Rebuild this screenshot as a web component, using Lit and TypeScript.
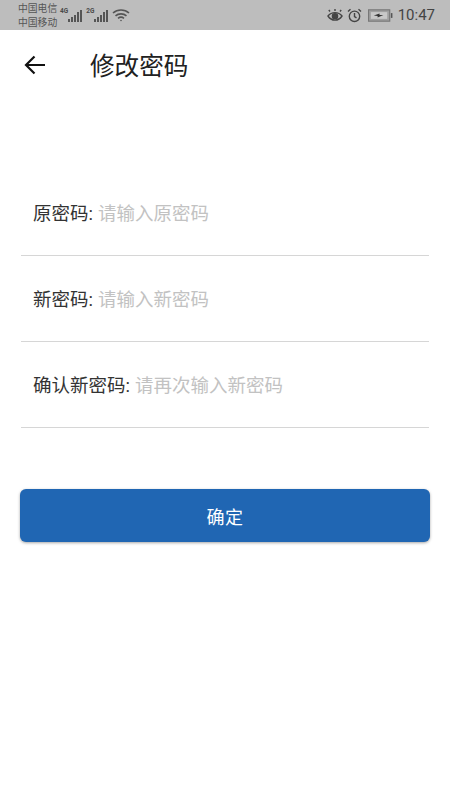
import { LitElement, html, css } from "lit";
import { customElement } from "lit/decorators.js";

@customElement("app-root")
export class AppRoot extends LitElement {
  static styles = css`
    :host { display: block; width: 450px; height: 800px; background: #fff; font-family: Roboto, "Noto Sans CJK SC", sans-serif; overflow: hidden; }
    .status { height: 30px; background: #bdbdbd; display: flex; align-items: center; padding: 0 15px 0 18px; color: #4a4a4a; box-sizing: border-box; }
    .carriers { display: flex; flex-direction: column; font-size: 9.8px; line-height: 14px; width: 42px; padding-top: 2px; white-space: nowrap; color: #555; }
    .sig { display: flex; align-items: flex-end; height: 16px; margin-right: 3px; }
    .sig span { font-size: 6.5px; font-weight: 700; align-self: flex-start; line-height: 8px; }
    .spacer { flex: 1; }
    .right { display: flex; align-items: center; }
    .time { font-size: 15px; color: #444; margin-left: 5px; }
    .alarm { margin-left: 4px; }
    .battery { margin-left: 6px; }
    .appbar { height: 72px; display: flex; align-items: center; padding-left: 23px; }
    .back { display: block; width: 24px; height: 24px; }
    .title { font-size: 24.6px; color: #212121; margin-left: 43px; line-height: 28px; padding-top: 1px; }
    .form { margin-top: 69px; padding: 0 21px; display: flex; flex-direction: column; }
    .row { height: 86px; border-bottom: 1px solid #d6d6d6; box-sizing: border-box; display: flex; align-items: center; padding: 0 12px 2px; font-size: 18.5px; white-space: pre; }
    .row .label { color: #333; }
    .row .ph { color: #c2c2c2; margin-left: 5px; }
    .row.first { height: 85px; }
    .btn { margin: 61px 20px 0; height: 53px; border-radius: 6px; background: #2066b3; color: #fff; font-size: 18px; display: flex; align-items: center; justify-content: center; box-shadow: 0 1px 3px rgba(0,0,0,.35); letter-spacing: 0.5px; }
  `;

  private bars() {
    return html`<svg width="15" height="14" viewBox="0 0 15 14" fill="#555">
      <rect x="0" y="10" width="2" height="3"></rect><rect x="3" y="8" width="2" height="5"></rect>
      <rect x="6" y="6" width="2" height="7"></rect><rect x="9" y="3" width="2" height="10"></rect>
      <rect x="12" y="1" width="2" height="12"></rect></svg>`;
  }

  render() {
    return html`
      <div class="status">
        <div class="carriers"><div>中国电信</div><div>中国移动</div></div>
        <div class="sig"><span>4G</span>${this.bars()}</div>
        <div class="sig"><span>2G</span>${this.bars()}</div>
        <svg width="18" height="14" viewBox="0 0 18 14" fill="none" stroke="#555" stroke-width="1.6">
          <path d="M1 5c4.500-4 11.500-4 16 0"></path><path d="M3.500 7.800c3-2.600 8-2.600 11 0"></path><path d="M6 10.300c1.800-1.400 4.200-1.400 6 0"></path>
          <circle cx="9" cy="12.500" r=".8" fill="#555" stroke="none"></circle></svg>
        <div class="spacer"></div>
        <div class="right">
          <svg width="16" height="15" viewBox="0 0 16 15" fill="none" stroke="#444" stroke-width="1.4">
            <path d="M1 8c3.500-4.500 10.500-4.500 14 0c-3.500 5.500-10.500 5.500-14 0z"></path><circle cx="8" cy="8.300" r="2.600" fill="#444"></circle>
            <path d="M3 3.500L1.800 2M8 3V1M13 3.500L14.200 2"></path></svg>
          <svg class="alarm" width="15" height="15" viewBox="0 0 15 15" fill="none" stroke="#444" stroke-width="1.4">
            <circle cx="7.500" cy="8.300" r="5.200"></circle><path d="M7.500 5v3.500l2 1.300M1 3.500L3.500 1.200M14 3.500L11.500 1.200"></path></svg>
          <svg class="battery" width="25" height="13" viewBox="0 0 26 13">
            <rect x=".6" y=".6" width="22" height="11.800" fill="#a0a0a0" stroke="#777" stroke-width="1.200"></rect>
            <rect x="3" y="3" width="17" height="7" fill="#c8c8c8"></rect>
            <rect x="23.800" y="4" width="1.600" height="5" fill="#555"></rect>
            <path d="M6 6.500l6-2v1.500h4l-6 2.500v-1.500z" fill="#333"></path></svg>
          <span class="time">10:47</span>
        </div>
      </div>
      <div class="appbar">
        <svg class="back" viewBox="0 0 24 24" fill="none" stroke="#111" stroke-width="2.200">
          <path d="M22 11H3M11.500 2.500L3 11l8.500 8.500"></path></svg>
        <div class="title">修改密码</div>
      </div>
      <div class="form">
        <div class="row first"><span class="label">原密码:</span><span class="ph">请输入原密码</span></div>
        <div class="row"><span class="label">新密码:</span><span class="ph">请输入新密码</span></div>
        <div class="row"><span class="label">确认新密码:</span><span class="ph">请再次输入新密码</span></div>
      </div>
      <div class="btn">确定</div>
    `;
  }
}
